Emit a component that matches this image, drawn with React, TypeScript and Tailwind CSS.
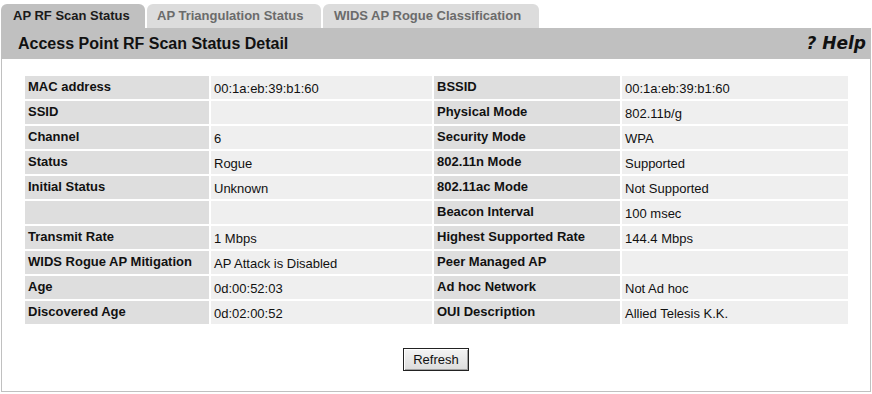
const rows: [string, string, string, string][] = [
  ['MAC address', '00:1a:eb:39:b1:60', 'BSSID', '00:1a:eb:39:b1:60'],
  ['SSID', '', 'Physical Mode', '802.11b/g'],
  ['Channel', '6', 'Security Mode', 'WPA'],
  ['Status', 'Rogue', '802.11n Mode', 'Supported'],
  ['Initial Status', 'Unknown', '802.11ac Mode', 'Not Supported'],
  ['', '', 'Beacon Interval', '100 msec'],
  ['Transmit Rate', '1 Mbps', 'Highest Supported Rate', '144.4 Mbps'],
  ['WIDS Rogue AP Mitigation', 'AP Attack is Disabled', 'Peer Managed AP', ''],
  ['Age', '0d:00:52:03', 'Ad hoc Network', 'Not Ad hoc'],
  ['Discovered Age', '0d:02:00:52', 'OUI Description', 'Allied Telesis K.K.'],
];

function Label({ text }: { text: string }) {
  return (
    <div className="h-[23px] bg-[#dedede] pl-[3px] pt-[3px] text-[13px] font-bold leading-[15px] text-[#111]">
      {text}
    </div>
  );
}

function Value({ text }: { text: string }) {
  return (
    <div className="h-[23px] bg-[#efefef] pl-[3px] pt-[5px] text-[13px] leading-[15px] text-[#111]">
      {text}
    </div>
  );
}

export default function App() {
  return (
    <div className="h-[394px] w-[872px] bg-white font-['Liberation_Sans',Arial,sans-serif]">
      <div className="ml-[1px] w-[870px] pt-[4px]">
        {/* Tabs */}
        <div className="flex h-[24px] gap-[2px] text-[13px] font-bold">
          <div className="flex w-[144px] items-center rounded-t-[6px] bg-[#c0c0c0] pl-[12px] text-[#1a1a1a]">
            AP RF Scan Status
          </div>
          <div className="flex w-[174px] items-center rounded-t-[6px] bg-[#dcdcdc] pl-[10px] text-[#6b6b6b]">
            AP Triangulation Status
          </div>
          <div className="flex w-[216px] items-center rounded-t-[6px] bg-[#dcdcdc] pl-[11px] text-[#6b6b6b]">
            WIDS AP Rogue Classification
          </div>
        </div>

        {/* Header */}
        <div className="flex h-[31px] items-center justify-between bg-[#c0c0c0] pl-[17px] pr-[5px]">
          <span className="text-[16px] font-bold text-[#111]">Access Point RF Scan Status Detail</span>
          <span className="font-['DejaVu_Sans',sans-serif] text-[17px] font-bold italic text-[#111]">? Help</span>
        </div>

        {/* Panel */}
        <div className="border-x border-b border-[#c0c0c0] pb-[20px] pt-[17px]">
          <div className="pl-[23px]">
            <div className="grid w-[823px] grid-cols-[184px_221px_186px_226px] gap-[2px]">
              {rows.map((r, i) => (
                <div key={i} className="contents">
                  <Label text={r[0]} />
                  <Value text={r[1]} />
                  <Label text={r[2]} />
                  <Value text={r[3]} />
                </div>
              ))}
            </div>
          </div>
          <div className="mt-[24px] flex justify-center">
            <button
              type="button"
              className="h-[23px] w-[66px] border border-[#222] bg-gradient-to-b from-[#f4f4f4] to-[#dcdcdc] text-[13px] text-[#111] shadow-[inset_1px_1px_0_#fff,inset_-1px_-1px_0_#a0a0a0]"
            >
              Refresh
            </button>
          </div>
        </div>
      </div>
    </div>
  );
}
